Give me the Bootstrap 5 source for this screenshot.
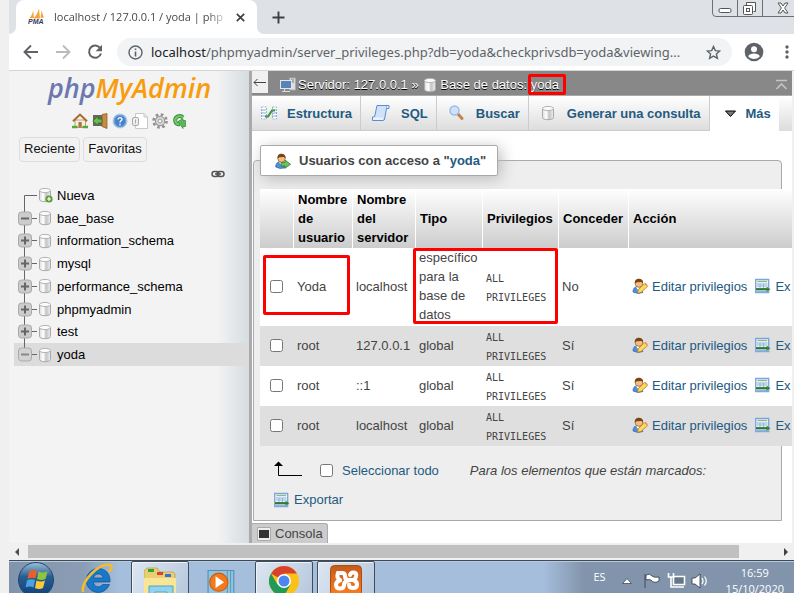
<!DOCTYPE html>
<html lang="es">
<head>
<meta charset="utf-8">
<meta name="viewport" content="width=device-width, initial-scale=1">
<title>localhost / 127.0.0.1 / yoda | phpMyAdmin</title>
<link href="https://cdn.jsdelivr.net/npm/bootstrap@5.3.0/dist/css/bootstrap.min.css" rel="stylesheet">
<style>
  :root { --ui: "Open Sans", "Noto Sans", sans-serif; --pma: "Liberation Sans", Arial, sans-serif; }
  body { background: #f0f0f0; font-family: var(--pma); font-size: 13px; line-height: 19px; color: #444; padding-left: 9px; }
  svg { flex: none; display: block; }
  a { color: #235a81; text-decoration: none; }
  button { border: 0; background: none; padding: 0; color: inherit; }

  .tabstrip { background: #dee1e6; height: 34px; }
  .tab-edge { width: 7px; background: #fff; }
  .tab-edge i { display: block; height: 34px; background: #dee1e6; border-bottom-right-radius: 7px; }
  .tab-edge.after i { border-radius: 0 0 0 7px; }
  .browser-tab { width: 241px; background: #fff; border-radius: 8px 8px 0 0; padding: 0 12px; font: 11px/34px var(--ui); color: #45484c; }
  .tab-title { width: 175px; white-space: nowrap; overflow: hidden; -webkit-mask-image: linear-gradient(90deg, #000 88%, transparent); mask-image: linear-gradient(90deg, #000 88%, transparent); }
  .toolbar { background: #fff; height: 37px; border-bottom: 1px solid #d5d5d5; padding: 0 4px 0 14px; }
  .omnibox { background: #f1f3f4; border-radius: 14px; height: 28px; padding: 0 11px; margin-left: 14px; }
  .url { font: 13px/20px "Noto Sans", sans-serif; color: #5f6368; white-space: nowrap; }
  .url b { font-weight: 400; color: #202124; }

  .side { width: 240px; background: linear-gradient(90deg, #f3f3f3 208px, #d6dce0); color: #111; }
  .divider { width: 3px; background: #aaa; }
  .logo { font: italic 600 27px/34px "Open Sans", sans-serif; color: #6c78af; padding-left: 39px; }
  .logo span { color: #f89c0e; }
  .side-icons { padding-left: 63px; gap: 4px; }
  .quick-row { padding-left: 10px; gap: 3px; }
  .quick { border: 1px solid #ddd; border-radius: 4px; padding: 1px 4px 2px; line-height: 20px; background: #f2f2f2; color: #111; }
  .tree { height: 182px; }
  .tree li { flex: 1 1 0; min-height: 0; padding-left: 4px; margin-left: 5px; }
  .tree li.current { background: #dcdcdc; }
  .tree a { color: #000; }

  .main { background: #fff; margin-right: 2px; }
  .crumbs { background: #888; height: 25px; color: #fff; text-shadow: 0 1px 0 #000; border-bottom: 1px solid #aaa; }
  .crumbs a { color: #fff; }
  .crumb-icon { margin-right: 2px; }
  .back { width: 16px; height: 22px; background: #f0f0f0; color: #444; }
  .hot { position: relative; }
  .ring { position: absolute; border: 3px solid #f00; border-radius: 2px; pointer-events: none; }
  .ring-db { inset: -1px -7px -1px -3px; }
  .menu { background: linear-gradient(#fff, #dcdcdc); }
  .menu a { height: 35px; font-weight: 700; border-right: 1px solid #ccc; border-bottom: 1px solid #ccc; padding: 0 8px; white-space: nowrap; }
  .menu a.open { background: #fff; border: 0; padding: 0 8px 0 14px; }

  .panel { border: 1px solid #aaa; border-radius: 4px 4px 0 0; background: #eee; margin: 29px 10px 0 1px; }
  .caption-box { width: 238px; height: 31px; margin: -16px 0 0 6px; background: #fff; border: 1px solid #aaa; border-radius: 2px; box-shadow: 3px 3px 15px #bbb; font-size: 13px; font-weight: 700; line-height: 19px; padding-left: 14px; white-space: nowrap; }
  .grid-wrap { position: relative; margin: 13px -11px 0 6px; }
  .users { table-layout: fixed; width: 100%; border-collapse: separate; border-spacing: 0; }
  .users th { height: 59px; padding: 1px 4px; color: #000; background: linear-gradient(#fff, #ccc); border-right: 1px solid #fff; vertical-align: middle; }
  .users th:last-child { border: 0; }
  .users td { padding: 0 3px 2px; height: 40px; vertical-align: middle; background: #fff; }
  .users td:nth-child(5) { padding: 2px 3px 0; }
  .users tr.shade td { background: #dfdfdf; }
  .users code { font: 10px/19px "DejaVu Sans Mono", monospace; color: #444; display: block; }
  .users input, .all input { width: 13px; height: 13px; margin: 0; display: block; }
  .all input { margin-right: 9px; }
  .all em { margin-left: 31px; }
  .users td:first-child { padding-left: 10px; }
  .c1 { width: 34px; } .c2 { width: 59px; } .c3 { width: 63px; } .c4 { width: 67px; } .c5 { width: 76px; } .c6 { width: 70px; }
  .ring-user { left: 3px; top: 66px; width: 87px; height: 60px; }
  .ring-priv { left: 153px; top: 59px; width: 145px; height: 76px; }
  .below { padding: 12px 0 7px 20px; }
  .console { background: #ccc; border: 1px solid #aaa; border-width: 1px 1px 0 0; border-top-right-radius: 3px; width: 76px; height: 21px; padding-left: 5px; margin-top: 2px; }

  .hscroll { height: 17px; background: #f0f0f0; padding: 0 5px; }
  .thumb { background: #c0c0c0; height: 13px; flex: 0 1 711px; }
  .taskbar { height: 33px; border-top: 1px solid #3f4a57; box-shadow: inset 0 1px #b6cbe0; background: linear-gradient(90deg, #8294ab 0, #8a9db5 75px, #a5bedb 110px, #a5bedb 535px, #8294ab 575px); font: 11px/16px var(--ui); color: #fff; overflow: hidden; }
  .task { width: 58px; height: 34px; padding-top: 3px; display: flex; justify-content: center; flex: none; }
  .task.wide { width: 76px; padding-top: 0; }
  .task.mid { width: 66px; }
  .task.on { border: 1px solid #414c5a; box-shadow: inset 1px 1px #edf3f9; background: linear-gradient(120deg, #dde6f1, #b7c8dc); border-radius: 2px; }
  .tray-icons { margin-top: 11px; }
  .tray { padding-right: 10px; }
</style>
<script src="https://cdn.jsdelivr.net/npm/bootstrap@5.3.0/dist/js/bootstrap.bundle.min.js"></script>
</head>
<body class="d-flex flex-column vh-100 overflow-hidden">

<svg class="position-absolute" width="0" height="0" aria-hidden="true">
  <defs>
    <linearGradient id="gCyl"><stop stop-color="#ddd"/><stop offset=".35" stop-color="#fff"/><stop offset=".6" stop-color="#c4c4c4"/><stop offset="1" stop-color="#eee"/></linearGradient>
    <linearGradient id="gOrb" x2="0" y2="1"><stop stop-color="#9fbfd4"/><stop offset=".4" stop-color="#285f92"/><stop offset="1" stop-color="#0e3f77"/></linearGradient>
    <linearGradient id="gFox" x2="0" y2="1"><stop stop-color="#c65b1b"/><stop offset="1" stop-color="#ff7e1e"/></linearGradient>
  </defs>
  <symbol id="db" viewBox="0 0 16 16"><path d="M2.500 3.500v9c0 1.300 2.500 2.200 5.500 2.200s5.500-.9 5.500-2.200v-9z" fill="url(#gCyl)" stroke="#aaa"/><ellipse cx="8" cy="3.500" rx="5.500" ry="2.100" fill="#fbfbfb" stroke="#b4b4b4"/></symbol>
  <symbol id="edit" viewBox="0 0 16 16"><path d="M1 14c0-3.500 1.500-5 4-5.200l3 .2 3 5.500-5 1z" fill="#4f8fdc" stroke="#2c62a8" stroke-width=".7"/><path d="M4 9l2 3 2.500-2.700z" fill="#fff"/><circle cx="7" cy="5.500" r="3.800" fill="#f4bd84" stroke="#9a5a25" stroke-width=".7"/><path d="M2.800 5.500C2.500 1.800 5 .6 7.500.8s4 2 3.500 4.700L9.500 4 5 4.200z" fill="#7c4315"/><path d="M5.500 15.200l.8-3.700 6.200-5.800 3 2.800-6.500 6z" fill="#f9d863" stroke="#c07d1c" stroke-width=".8"/><path d="M12.500 5.700l1-1 2.300 2.600-.6 1z" fill="#e69070"/></symbol>
  <symbol id="usr" viewBox="0 0 16 16"><path d="M.7 14c0-3.500 1.800-5.200 4.500-5.200s5 1.500 5 6l-5 .7z" fill="#4f8fdc" stroke="#2c62a8" stroke-width=".7"/><path d="M4 9l2 3 2.500-2.700z" fill="#fff"/><circle cx="6.500" cy="5.500" r="3.700" fill="#f4bd84" stroke="#9a5a25" stroke-width=".7"/><path d="M2.500 5.500C2.200 1.800 4.500.6 7 .8s4 2 3.500 4.700L9 4l-4.500.2z" fill="#7c4315"/><path d="M6 9.500h4V7l5.500 4.300-5.500 4V13H6z" fill="#72bd5d" stroke="#2f7d2b" stroke-width=".8"/></symbol>
  <symbol id="exp" viewBox="0 0 16 16"><path d="M.7 1.500h13v13H.7z" fill="#edf3fb" stroke="#7da2dc" stroke-width="1.300"/><path d="M2.500 3.500h9.500" stroke="#8bbf73" stroke-width="1.200"/><path d="M2 6h10.500M2 8h10.500M5 6v4M8.500 6v4" stroke="#92b4e0"/><path d="M1.500 13.500h12" stroke="#8fb2e6" stroke-width="1.800"/><path d="M1 10h10.500V8.500l4 2.700-4 2.700v-1.600H1z" fill="#48963e"/><path d="M1 11.200h13" stroke="#1e5f24" stroke-width=".8"/></symbol>
  <symbol id="minus" viewBox="0 0 19 23"><path d="M6.500 0v23M13 11.500h6" stroke="#666"/><rect x=".5" y="5" width="13" height="13" rx="3" fill="#ccc" stroke="#aaa"/><path d="M3 11.500h8" stroke="#666" stroke-width="2"/></symbol>
  <symbol id="plus" viewBox="0 0 19 23"><use href="#minus" width="19" height="23"/><path d="M7 7.500v8" stroke="#666" stroke-width="2"/></symbol>
  <symbol id="last" viewBox="0 0 19 23"><path d="M6.500 0v5M13 11.500h6" stroke="#666"/><rect x=".5" y="5" width="13" height="13" rx="3" fill="#d3d3d3" stroke="#aaa"/><path d="M3 11.500h8" stroke="#888" stroke-width="2"/></symbol>
</svg>

<header>
  <div class="tabstrip d-flex">
    <div class="tab-edge"><i></i></div>
    <div class="browser-tab d-flex align-items-center">
      <svg width="18" height="18" viewBox="0 0 18 18" class="me-2"><path d="M5 1.500C5 5 3.500 8 1.500 10H6zM11 0C10.500 4 8 8 5.500 10.500H12zM13.500 2.500c1 3 1.500 5 2.500 7l-3.500.5z" fill="#f8a33a"/><text x="0" y="16" font-family="Liberation Sans" font-size="7" font-weight="700" font-style="italic" fill="#333a5e">PMA</text></svg>
      <div class="tab-title">localhost / 127.0.0.1 / yoda | php</div>
      <button class="ms-auto" aria-label="Cerrar pestaña"><svg width="9" height="9" viewBox="0 0 9 9"><path d="M.8.8l7.400 7.400M8.200.8L.8 8.200" stroke="#3c4043" stroke-width="1.700"/></svg></button>
    </div>
    <div class="tab-edge after"><i></i></div>
    <button class="ms-2" aria-label="Nueva pestaña"><svg width="13" height="13" viewBox="0 0 13 13"><path d="M6.500.500v12M.5 6.500h12" stroke="#3c4043" stroke-width="1.900"/></svg></button>
    <div class="ms-auto align-self-start">
      <svg width="82" height="17" viewBox="0 0 82 17" fill="none" stroke="#6b7077"><path d="M.5 0v13q0 3.500 3.500 3.500h78M25.500 0v16M50.500 0v16"/><rect x="7" y="8.500" width="12" height="4" rx="1.500" fill="#fff" stroke="#555"/><path d="M34.500 5V2.500h9v9h-2" fill="#fff" stroke="#555"/><rect x="31.500" y="5.500" width="9" height="9" rx="1" fill="#fff" stroke="#555"/><rect x="34.500" y="8.500" width="3" height="3" stroke="#555"/><path d="M66 3h3l2 3 2-3h3l-3.300 5L76 13h-3l-2-3-2 3h-3l3.300-5z" fill="#fff" stroke="#555"/></svg>
    </div>
  </div>
  <div class="toolbar d-flex align-items-center">
    <button aria-label="Atrás"><svg width="16" height="16" viewBox="0 0 16 16" fill="none" stroke="#5f6368" stroke-width="1.900"><path d="M15 8H2M8 1.500L1.500 8 8 14.500"/></svg></button>
    <button class="ms-3" aria-label="Adelante"><svg width="16" height="16" viewBox="0 0 16 16" fill="none" stroke="#b9bbbe" stroke-width="1.900"><path d="M1 8h13M8 1.500L14.500 8 8 14.500"/></svg></button>
    <button class="ms-3" aria-label="Recargar"><svg width="16" height="16" viewBox="0 0 16 16"><path d="M13.200 4.200A6.100 6.100 0 1 0 14 9.500" fill="none" stroke="#5f6368" stroke-width="2"/><path d="M15 .8v6.400H8.600z" fill="#5f6368"/></svg></button>
    <div class="omnibox d-flex align-items-center flex-grow-1">
      <svg width="15" height="15" viewBox="0 0 15 15" class="me-2"><circle cx="7.500" cy="7.500" r="6.500" fill="none" stroke="#5f6368" stroke-width="1.400"/><path d="M7.500 6.500v5M7.500 3.500v1.600" stroke="#5f6368" stroke-width="1.600"/></svg>
      <div class="url flex-grow-1"><b>localhost</b>/phpmyadmin/server_privileges.php?db=yoda&amp;checkprivsdb=yoda&amp;viewing...</div>
      <button aria-label="Marcador"><svg width="15" height="15" viewBox="0 0 15 15"><path d="M7.500 1.500l1.800 4.100 4.500.4-3.400 3 1 4.400-3.900-2.300-3.900 2.300 1-4.400-3.400-3 4.500-.4z" fill="none" stroke="#5f6368" stroke-width="1.400"/></svg></button>
    </div>
    <button class="ms-2 ps-1" aria-label="Perfil"><svg width="20" height="20" viewBox="0 0 20 20"><circle cx="10" cy="10" r="9.300" fill="#5f6368"/><circle cx="10" cy="7.200" r="3" fill="#fff"/><path d="M4.200 14.200c1.200-3.500 10.400-3.500 11.600 0-2.500 3.600-9.100 3.600-11.600 0z" fill="#fff"/></svg></button>
    <button class="ms-3 ps-1" aria-label="Menú"><svg width="6" height="16" viewBox="0 0 6 16" fill="#5f6368"><circle cx="3" cy="3" r="1.700"/><circle cx="3" cy="8" r="1.700"/><circle cx="3" cy="13" r="1.700"/></svg></button>
  </div>
</header>

<div class="d-flex flex-grow-1 overflow-hidden">
  <aside class="side flex-shrink-0">
    <div class="logo">php<span>MyAdmin</span></div>
    <div class="side-icons d-flex mt-2 pb-2">
      <svg width="16" height="16" viewBox="0 0 16 16"><path d="M3 7h10.500v7.500H3z" fill="#f7eedd" stroke="#b08a5a" stroke-width=".8"/><path d="M1 8.300L8 1.600l7 6.700" fill="none" stroke="#a8692c" stroke-width="2"/><path d="M6.500 9h3.200v5.500H6.500z" fill="#a9713c"/><path d="M0 14h5.500M10.500 14H16" stroke="#55a83c" stroke-width="2.600"/></svg>
      <svg width="16" height="16" viewBox="0 0 16 16"><path d="M1 2h10v11H1z" fill="#6d665c"/><path d="M10 1.500l5-1v15l-5-2z" fill="#c98a45" stroke="#8b5520" stroke-width=".7"/><path d="M10 6H6V3L.8 8 6 12.500V10h4z" fill="#68be55" stroke="#287427" stroke-width=".8"/></svg>
      <svg width="16" height="16" viewBox="0 0 16 16"><circle cx="8" cy="8" r="7" fill="#6fa3de" stroke="#b8cde8"/><circle cx="8" cy="8" r="5.200" fill="#4781cb"/><path d="M6 6.500c.2-2.800 4.300-2.300 4 0-.2 1.300-2 1.300-2 3M8 10.800v1.500" fill="none" stroke="#fff" stroke-width="1.400"/></svg>
      <svg width="16" height="16" viewBox="0 0 16 16"><path d="M3.500.5H12l3.500 3.500v11.500h-12zM12 .5V4h3.500" fill="#fff" stroke="#c8c8c8"/><rect x=".5" y="4.500" width="6" height="8" rx="1.500" fill="#eee" stroke="#aaa"/><path d="M3.500 6.500v4" stroke="#aaa"/></svg>
      <svg width="16" height="16" viewBox="0 0 16 16" fill="none"><circle cx="8" cy="8" r="6.500" stroke="#929292" stroke-width="2.600" stroke-dasharray="2.600 2.500"/><circle cx="8" cy="8" r="4.600" fill="#ddd" stroke="#999" stroke-width="1.200"/><circle cx="8" cy="8" r="2" fill="#f3f3f3" stroke="#999"/></svg>
      <svg width="16" height="16" viewBox="0 0 16 16"><path d="M11 4.500C8 1.500 3 3.500 3.200 7.700 3.500 10.500 5.500 11.500 8 11.200" fill="none" stroke="#348b3b" stroke-width="4"/><path d="M11 4.500C8 1.500 3 3.500 3.200 7.700 3.500 10.500 5.500 11.500 8 11.200" fill="none" stroke="#74c569" stroke-width="2.200"/><path d="M6 8.500l5-3v2h2.500v6H11v2z" fill="#5db659" stroke="#348b3b" stroke-width=".7"/></svg>
    </div>
    <div class="quick-row d-flex">
      <button class="quick">Reciente</button><button class="quick">Favoritas</button>
    </div>
    <div class="d-flex justify-content-end mt-2 pe-4">
      <svg width="14" height="10" viewBox="0 1 14 9" fill="none" stroke="#555" stroke-width="1.500"><rect x="1" y="2" width="7" height="5" rx="2.500"/><rect x="6" y="2" width="7" height="5" rx="2.500"/><path d="M4 4.500h6"/></svg>
    </div>
    <ul class="tree list-unstyled d-flex flex-column mt-1 mb-0">
      <li class="d-flex align-items-center"><svg width="19" height="23" viewBox="0 0 19 23"><path d="M6.500 23V11.500H21" fill="none" stroke="#666"/></svg><svg width="16" height="16" viewBox="0 0 16 16"><use href="#db" width="16" height="16"/><circle cx="12" cy="12" r="3.600" fill="#5b9c38"/><path d="M12 10v4M10 12h4" stroke="#fff" stroke-width="1.200"/></svg><a href="#" class="ms-1">Nueva</a></li>
      <li class="d-flex align-items-center"><svg width="19" height="23"><use href="#minus"/></svg><svg width="16" height="16"><use href="#db"/></svg><a href="#" class="ms-1">bae_base</a></li>
      <li class="d-flex align-items-center"><svg width="19" height="23"><use href="#plus"/></svg><svg width="16" height="16"><use href="#db"/></svg><a href="#" class="ms-1">information_schema</a></li>
      <li class="d-flex align-items-center"><svg width="19" height="23"><use href="#plus"/></svg><svg width="16" height="16"><use href="#db"/></svg><a href="#" class="ms-1">mysql</a></li>
      <li class="d-flex align-items-center"><svg width="19" height="23"><use href="#plus"/></svg><svg width="16" height="16"><use href="#db"/></svg><a href="#" class="ms-1">performance_schema</a></li>
      <li class="d-flex align-items-center"><svg width="19" height="23"><use href="#plus"/></svg><svg width="16" height="16"><use href="#db"/></svg><a href="#" class="ms-1">phpmyadmin</a></li>
      <li class="d-flex align-items-center"><svg width="19" height="23"><use href="#plus"/></svg><svg width="16" height="16"><use href="#db"/></svg><a href="#" class="ms-1">test</a></li>
      <li class="d-flex align-items-center current"><svg width="19" height="23"><use href="#last"/></svg><svg width="16" height="16"><use href="#db"/></svg><a href="#" class="ms-1">yoda</a></li>
    </ul>
  </aside>
  <div class="divider flex-shrink-0"></div>

  <main class="main flex-grow-1 overflow-hidden d-flex flex-column">
    <div class="crumbs d-flex align-items-start flex-shrink-0">
      <button class="back" aria-label="Ocultar panel"><svg width="16" height="22" viewBox="0 0 16 22"><path d="M2 11.500h12M5.500 8L2 11.500 5.500 15" fill="none" stroke="#444"/></svg></button>
      <div class="d-flex align-items-center text-nowrap mt-1 ps-2 ms-1">
        <svg width="16" height="16" viewBox="0 0 16 16" class="crumb-icon"><path d="M9.500 1h6v12h-6z" fill="#ddd" stroke="#aaa"/><path d="M11 3h3M11 5h3" stroke="#777"/><rect x=".5" y="3.500" width="11" height="8" fill="#5b82b5" stroke="#dfe6ef"/><path d="M4.500 12v2M2 14.500h8" stroke="#ddd"/></svg>
        <a href="#">Servidor: 127.0.0.1</a>&nbsp;»&nbsp;<svg width="16" height="16" class="crumb-icon"><use href="#db"/></svg><a href="#">Base de datos:</a>&nbsp;<span class="hot"><a href="#">yoda</a><span class="ring ring-db"></span></span>
      </div>
      <svg width="13" height="12" viewBox="0 0 13 12" class="ms-auto mt-2 me-1" fill="none" stroke="#c4c4c4" stroke-width="1.600"><path d="M1 1.500h11M1.500 10l5-5 5 5"/></svg>
    </div>
    <nav class="menu d-flex flex-shrink-0">
      <a href="#" class="d-flex align-items-center"><svg width="19" height="16" viewBox="0 0 19 16" class="me-2"><path d="M1.500 2h5v12h-5zM12.500 2h4v12h-4z" fill="#fff" stroke="#9bb7d8" stroke-dasharray="2 1"/><path d="M1 5h5M1 8h5M1 11h5M12 5h5M12 8h5M12 11h5" stroke="#87abd6"/><path d="M5 11.500h3L12 5.500h3" fill="none" stroke="#3e9642" stroke-width="2.200"/></svg>Estructura</a>
      <a href="#" class="d-flex align-items-center"><svg width="24" height="18" viewBox="0 0 24 18" class="me-2"><path d="M8 1.500h10l-2.500 14H5z" fill="#cfe2fa" stroke="#5c8ccb"/><path d="M18 1.500h2v3h-2.500M5 13H3.500v3.500H14q1.500 0 1.500-2.500" fill="#e9f2fd" stroke="#5c8ccb"/></svg>SQL</a>
      <a href="#" class="d-flex align-items-center"><svg width="23" height="16" viewBox="0 0 23 16" class="me-2"><path d="M12.500 8.500l4.500 5" stroke="#c4834b" stroke-width="3" stroke-linecap="round"/><circle cx="9.500" cy="5.500" r="4.500" fill="#cfe2fa" stroke="#9dbde6" stroke-width="1.500"/></svg>Buscar</a>
      <a href="#" class="d-flex align-items-center"><svg width="22" height="16" viewBox="0 0 22 16" class="me-2"><use href="#db" x="3" width="16" height="16"/></svg>Generar una consulta</a>
      <a href="#" class="d-flex align-items-center open"><svg width="14" height="8" viewBox="0 0 14 8" class="me-2"><path d="M1.500 1h10L6.500 6.500z" fill="#777" stroke="#000"/></svg>Más</a>
    </nav>

    <section class="panel">
      <h1 class="caption-box d-flex align-items-center mb-0"><svg width="16" height="16" class="me-2"><use href="#usr"/></svg><span>Usuarios con acceso a "<a href="#">yoda</a>"</span></h1>
      <div class="grid-wrap">
        <table class="users">
          <colgroup><col class="c1"><col class="c2"><col class="c3"><col class="c4"><col class="c5"><col class="c6"><col></colgroup>
          <thead><tr><th></th><th>Nombre de usuario</th><th>Nombre del servidor</th><th>Tipo</th><th>Privilegios</th><th>Conceder</th><th>Acción</th></tr></thead>
          <tbody>
            <tr><td><input type="checkbox" aria-label="Yoda localhost"></td><td>Yoda</td><td>localhost</td><td>específico para la base de datos</td><td><code>ALL PRIVILEGES</code></td><td>No</td><td><div class="d-flex align-items-center text-nowrap"><svg width="16" height="16" class="me-1"><use href="#edit"/></svg><a href="#">Editar privilegios</a><svg width="16" height="16" class="ms-2 me-1"><use href="#exp"/></svg><a href="#">Ex</a></div></td></tr>
            <tr class="shade"><td><input type="checkbox" aria-label="root 127.0.0.1"></td><td>root</td><td>127.0.0.1</td><td>global</td><td><code>ALL PRIVILEGES</code></td><td>Sí</td><td><div class="d-flex align-items-center text-nowrap"><svg width="16" height="16" class="me-1"><use href="#edit"/></svg><a href="#">Editar privilegios</a><svg width="16" height="16" class="ms-2 me-1"><use href="#exp"/></svg><a href="#">Ex</a></div></td></tr>
            <tr><td><input type="checkbox" aria-label="root ::1"></td><td>root</td><td>::1</td><td>global</td><td><code>ALL PRIVILEGES</code></td><td>Sí</td><td><div class="d-flex align-items-center text-nowrap"><svg width="16" height="16" class="me-1"><use href="#edit"/></svg><a href="#">Editar privilegios</a><svg width="16" height="16" class="ms-2 me-1"><use href="#exp"/></svg><a href="#">Ex</a></div></td></tr>
            <tr class="shade"><td><input type="checkbox" aria-label="root localhost"></td><td>root</td><td>localhost</td><td>global</td><td><code>ALL PRIVILEGES</code></td><td>Sí</td><td><div class="d-flex align-items-center text-nowrap"><svg width="16" height="16" class="me-1"><use href="#edit"/></svg><a href="#">Editar privilegios</a><svg width="16" height="16" class="ms-2 me-1"><use href="#exp"/></svg><a href="#">Ex</a></div></td></tr>
          </tbody>
        </table>
        <span class="ring ring-user"></span><span class="ring ring-priv"></span>
      </div>
      <div class="below">
        <div class="all d-flex align-items-center">
          <svg width="30" height="24" viewBox="1 0 30 24"><path d="M5.500 7v10.500H29" fill="none" stroke="#000"/><path d="M1 8l4.500-4.500L10 8z"/></svg>
          <input type="checkbox" id="all" class="ms-3"><label for="all"><a href="#">Seleccionar todo</a></label>
          <em>Para los elementos que están marcados:</em>
        </div>
        <a href="#" class="d-inline-flex align-items-center mt-1 pt-1"><svg width="16" height="16" class="me-1"><use href="#exp"/></svg>Exportar</a>
      </div>
    </section>
    <button class="console d-flex align-items-center flex-shrink-0"><svg width="14" height="14" viewBox="0 0 14 14" class="me-1"><path d="M.5.500h13v13H.5z" fill="#eee" stroke="#aaa"/><path d="M2 3h10v8H2z" fill="#333"/></svg>Consola</button>
  </main>
</div>

<div class="hscroll d-flex align-items-center flex-shrink-0">
  <svg width="6" height="8" viewBox="0 0 6 8" class="me-2"><path d="M5 0v8L1 4z" fill="#505050"/></svg>
  <div class="thumb"></div>
  <svg width="6" height="8" viewBox="0 0 6 8" class="ms-auto"><path d="M1 0v8l4-4z" fill="#404040"/></svg>
</div>

<footer class="taskbar d-flex flex-shrink-0">
  <button class="ms-2 flex-shrink-0" aria-label="Inicio"><svg width="38" height="32" viewBox="0 0 38 32"><circle cx="19" cy="19" r="17.500" fill="url(#gOrb)" stroke="#20486e"/><path d="M12 11q4-3 8-1l-1.500 7.500q-4-1.500-8 .5z" fill="#ee5d28"/><path d="M21.500 10.500q4 2 9 0L28.500 18q-4 2-8.500 0z" fill="#8cc63f"/><path d="M10 19.500q4-2 8-.5L16.500 26.500q-4-2-8 0z" fill="#4ba3e3"/><path d="M19.500 19.500q4.500 2 8.500 0L26 27q-4 2-8 0z" fill="#fdc934"/></svg></button>
  <button class="task wide ps-2" aria-label="Internet Explorer"><svg width="34" height="32" viewBox="0 0 34 32"><path d="M18 7.500a12 12 0 1 0 11.500 16h-7c-3 4-9 2.500-9-2.500H30C30.500 13 26 7.500 18 7.500zM13.500 17c1-5.500 9-5.500 9.500 0z" fill="#1a78c8" stroke="#0f4f96" stroke-width=".7"/><path d="M3 31C1 20 19 2 30 4c3 .7 1 5-1 7" fill="none" stroke="#f3bd2e" stroke-width="2.600"/></svg></button>
  <button class="task on" aria-label="Explorador"><svg width="32" height="36" viewBox="0 0 32 36"><path d="M0 10V6l3-3h10l3 4h13l2 2v27H0z" fill="#e8cf73" stroke="#b79a3f" stroke-width=".7"/><path d="M4 4h6v3H4z" fill="#2ca53a"/><path d="M13 7h6v3h-6z" fill="#d8432e"/><path d="M21 9h6v3h-6z" fill="#3274d9"/><path d="M0 13h32v23H0z" fill="#f8e595"/><path d="M5 36V21h24v15h-6v-9H11v9z" fill="#8fd3ed" stroke="#4fa5c9"/></svg></button>
  <button class="task mid" aria-label="Reproductor"><svg width="38" height="30" viewBox="2 0 34 28"><path d="M6 6h24v24H6z" fill="#90c4df" stroke="#4f8fb5"/><path d="M27 6v24M24 6v24" stroke="#5c9cc0"/><circle cx="16" cy="17" r="8.500" fill="#f07a1c" stroke="#cf5b0b"/><path d="M13 11.500l8 5.500-8 5.500z" fill="#fff"/></svg></button>
  <button class="task on" aria-label="Chrome"><svg width="30" height="30" viewBox="0 0 30 30"><circle cx="15" cy="16" r="15" fill="#fbc116"/><path d="M15 16L2 8.500A15 15 0 0 1 28 8.500H15z" fill="#d9412f"/><path d="M2 8.500A15 15 0 0 0 15 31l6.500-11.500H8.500z" fill="#219a55"/><circle cx="15" cy="16" r="7" fill="#fff"/><circle cx="15" cy="16" r="5.500" fill="#4a86ee"/></svg></button>
  <button class="task on ms-1" aria-label="XAMPP"><svg width="32" height="32" viewBox="0 0 32 32"><rect x=".5" y=".5" width="31" height="31" rx="4" fill="url(#gFox)" stroke="#a84f14"/><g fill="none" stroke="#fff" stroke-width="4" stroke-linecap="round" stroke-linejoin="round"><path d="M8 8h4q3 0 3 3 0 4 4 4h4"/><path d="M8 8q-2 5 2 7"/><path d="M10 15.500q-4 1-4 4.500t4 3.500q4 0 4-3.500 0-3 3-4"/><path d="M20 10q1-3 4-2.500t2 4-3 3.500q4 1 4 4.500t-4 3.500q-4 0-4-3.500"/></g></svg></button>
  <div class="tray ms-auto d-flex">
    <span class="mt-2 me-3">ES</span>
    <svg width="10" height="8" viewBox="0 0 8 6" class="mt-3 me-2"><path d="M4 1l3.500 4h-7z" fill="#fff" stroke="#39465a" stroke-width=".6"/></svg>
    <svg width="70" height="18" viewBox="0 0 70 18" class="tray-icons me-3"><path d="M5 2v14M6 3q4-2 6 1 2 2 7 1v4q-5 3-8-1-3-1-5 0z" fill="#fff" stroke="#2d3848" stroke-width=".8"/><path d="M33.500 4.500h11v8h-11z" fill="#65758a" stroke="#fff" stroke-width="1.600"/><path d="M35 15h9M28.500 1v4h5V1M31 5v10h4" fill="none" stroke="#fff" stroke-width="1.600"/><path d="M52 6h3l5-4v14l-5-4h-3z" fill="#fff" stroke="#2d3848" stroke-width=".8"/><path d="M62 6q2 3 0 6M64.500 4.500q3.500 4.500 0 9" fill="none" stroke="#fff" stroke-width="1.200"/></svg>
    <div class="text-center pt-1">16:59<br>15/10/2020</div>
  </div>
</footer>
</body>
</html>
